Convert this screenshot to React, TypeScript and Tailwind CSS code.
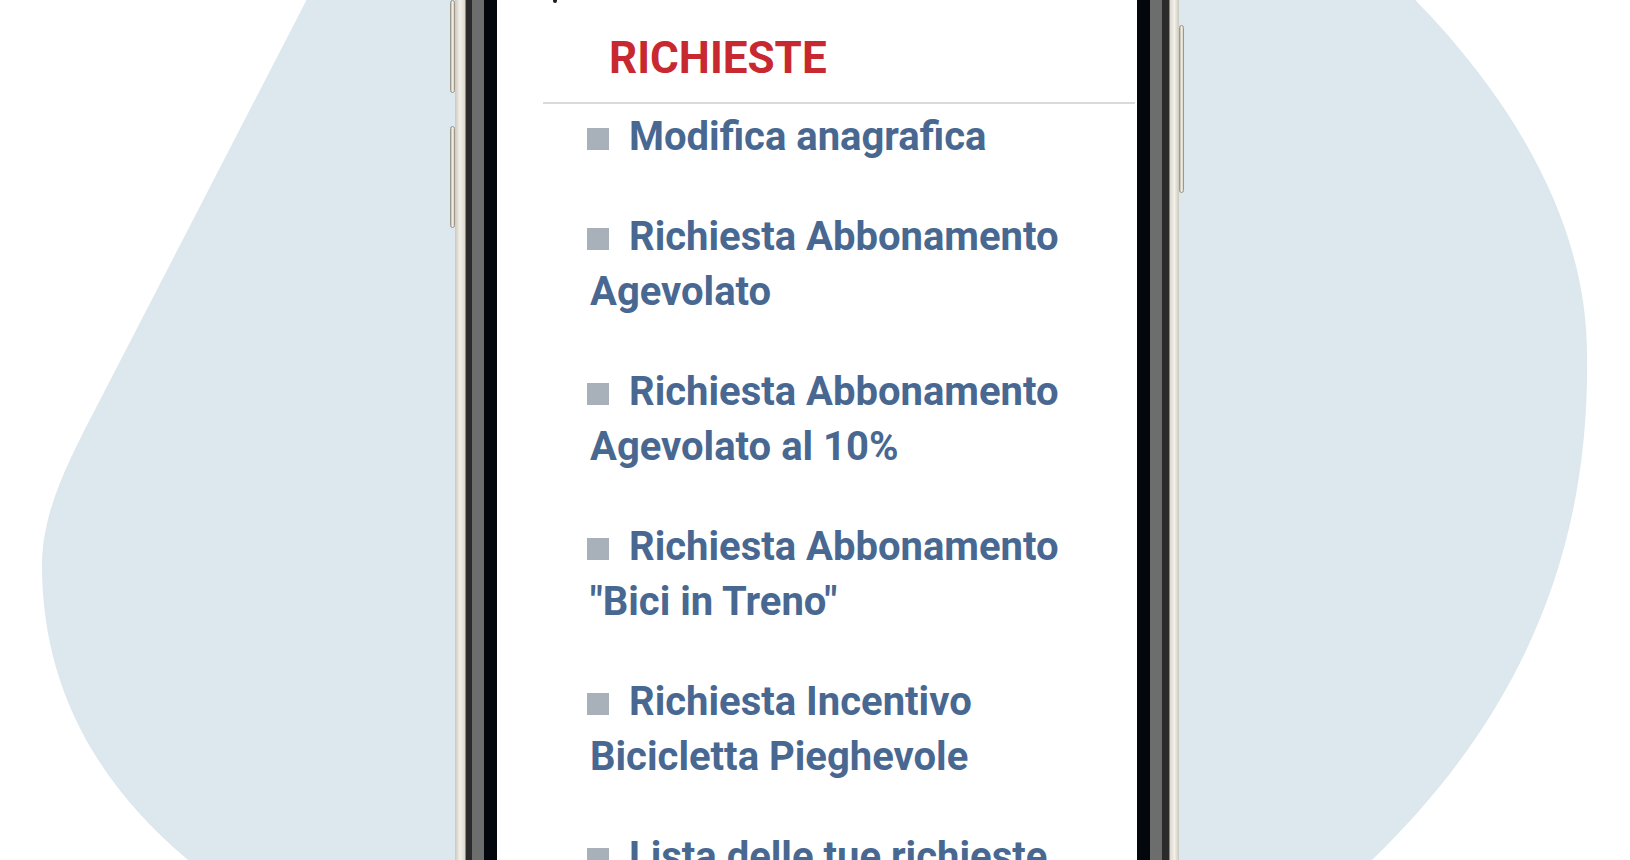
import React from "react";

const items = [
  "Modifica anagrafica",
  "Richiesta Abbonamento Agevolato",
  "Richiesta Abbonamento Agevolato al 10%",
  "Richiesta Abbonamento \"Bici in Treno\"",
  "Richiesta Incentivo Bicicletta Pieghevole",
  "Lista delle tue richieste",
];

function SideButton({ h }: { h: string }) {
  return (
    <div
      className={`${h} shrink-0 w-[5px] rounded-[3px] border border-[#9d988a] bg-gradient-to-r from-[#bdb8aa] via-[#efece5] to-[#d6d2c6]`}
    />
  );
}

export default function App() {
  return (
    <div className="relative w-[1630px] h-[860px] overflow-hidden bg-white font-['Roboto',sans-serif]">
      <svg
        className="absolute inset-0"
        width="1630"
        height="860"
        viewBox="0 0 1630 860"
      >
        <path
          d="M 322 -30 L 100 400 C 70 458, 42 510, 42 565 C 42 680, 90 790, 220 885 L 1345 885 C 1530 720, 1590 540, 1587 354 C 1587 230, 1520 100, 1395 -20 Z"
          fill="#dce8ee"
        />
      </svg>

      <div className="relative flex h-full ml-[450px]">
        {/* left buttons */}
        <div className="flex flex-col w-[5px]">
          <SideButton h="h-[93px]" />
          <div className="h-[33px] shrink-0" />
          <SideButton h="h-[102px]" />
        </div>
        {/* left frame */}
        <div className="w-[10px] h-full bg-gradient-to-r from-[#cdc8bb] via-[#f2f0ea] to-[#dcd8cd]" />
        <div className="w-[1px] h-full bg-[#8f8a7e]" />
        <div className="w-[6px] h-full bg-[#2b2b2b]" />
        <div className="w-[12px] h-full bg-[#6b6e6c]" />
        <div className="w-[13px] h-full bg-[#03070b]" />

        {/* screen */}
        <div className="w-[640px] h-full bg-white overflow-hidden">
          <div className="h-[3px] w-[4px] ml-[56px] rounded-b-full bg-[#1f1f1f]" />
          <div className="mt-[29px] pl-[112px] text-[44px] leading-[52px] font-bold text-[#c8282f]">
            RICHIESTE
          </div>
          <div className="mt-[18px] h-[2px] ml-[46px] mr-[2px] bg-[#dadada]" />
          <div className="mt-[5px] pl-[93px] w-[606px] flex flex-col gap-[45px]">
            {items.map((t) => (
              <div
                key={t}
                className="shrink-0 text-[40px] leading-[55px] font-bold text-[#486891]"
              >
                <span className="inline-block w-[22px] h-[22px] -ml-[3px] mr-[20px] bg-[#a8b0b9]" />
                {t}
              </div>
            ))}
          </div>
        </div>

        {/* right frame */}
        <div className="w-[13px] h-full bg-[#03070b]" />
        <div className="w-[12px] h-full bg-[#6b6e6c]" />
        <div className="w-[7px] h-full bg-[#2b2b2b]" />
        <div className="w-[1px] h-full bg-[#8f8a7e]" />
        <div className="w-[9px] h-full bg-gradient-to-r from-[#dcd8cd] via-[#f2f0ea] to-[#cdc8bb]" />
        <div className="flex flex-col w-[5px]">
          <div className="h-[25px] shrink-0" />
          <SideButton h="h-[168px]" />
        </div>
      </div>
    </div>
  );
}
